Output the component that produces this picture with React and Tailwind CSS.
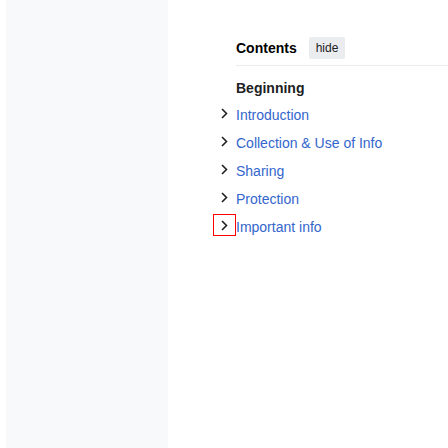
import React from "react";

const items = ["Introduction", "Collection & Use of Info", "Sharing", "Protection", "Important info"];

function Chevron() {
  return (
    <svg width="7" height="11" viewBox="0 0 7 11" fill="none">
      <path d="M1 1 L5.5 5.5 L1 10" stroke="#202122" strokeWidth="1.6" />
    </svg>
  );
}

export default function App() {
  return (
    <div className="flex w-[448px] h-[448px] bg-white overflow-hidden" style={{ fontFamily: '"Liberation Sans", Arial, sans-serif' }}>
      <div className="w-[6px] shrink-0 bg-white" />
      <div className="w-[162px] shrink-0 bg-[#f8f9fa]" />
      <div className="flex-1 pl-[45px] pt-[37px]">
        <div className="pl-[23px]">
          <div className="flex items-center h-[22px]">
            <span className="text-[14px] font-bold text-[#000]">Contents</span>
            <span className="ml-[12px] h-[22px] px-[7px] flex items-center rounded-[2px] bg-[#eaecf0] text-[12px] text-[#202122]">hide</span>
          </div>
          <div className="mt-[6px] h-px bg-[#eaecf0]" />
          <div className="mt-[8px] h-[28px] flex items-center text-[14px] font-bold text-[#202122]">Beginning</div>
        </div>
        <div className="-mt-px flex flex-col">
          {items.map((t, i) => (
            <div key={t} className="flex items-start h-[28px]">
              <div className={"mt-[1px] w-[23px] h-[22px] flex items-center justify-center shrink-0 " + (i === items.length - 1 ? "border border-[#ff0000]" : "border border-transparent")}>
                <Chevron />
              </div>
              <span className="h-[28px] flex items-center text-[14px] text-[#3366cc]">{t}</span>
            </div>
          ))}
        </div>
      </div>
    </div>
  );
}
